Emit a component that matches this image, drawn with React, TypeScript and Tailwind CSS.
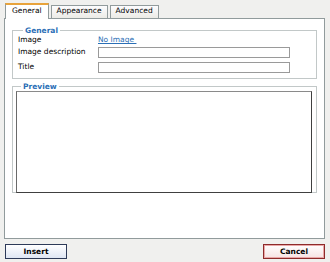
import React from "react";

const Tab = ({ label, active }: { label: string; active?: boolean }) => {
  if (active) {
    return (
      <div className="relative z-10 h-[16px] -mb-px bg-white border border-[#919b9c] border-b-0 border-t-[#e8a33b] border-t-2 px-[6px] pt-[2px] text-[#000]">
        {label}
      </div>
    );
  }
  return (
    <div className="h-[13px] bg-gradient-to-b from-[#fcfcfe] to-[#ecebe6] border border-[#919b9c] border-b-0 px-[5px] pt-[1px] text-[#000]">
      {label}
    </div>
  );
};

export default function App() {
  return (
    <div
      className="w-[330px] h-[262px] bg-[#f0f0ee] text-[7.5px] leading-none text-black overflow-hidden"
      style={{ fontFamily: '"DejaVu Sans", Verdana, sans-serif' }}
    >
      <div className="flex items-end gap-[2px] pl-[5px] pt-[2px] h-[18px]">
        <Tab label="General" active />
        <Tab label="Appearance" />
        <Tab label="Advanced" />
      </div>

      <div className="ml-[4px] w-[321px] h-[221px] bg-white border border-[#919b9c] pl-[7px] pt-[8px]">
        <fieldset className="w-[305px] h-[52px] border border-[#c2c8c8] pl-[5px]">
          <legend className="ml-[5px] px-[2px] font-bold text-[#2b6fb6]">General</legend>
          <div className="flex flex-col">
            <div className="flex items-center h-[9px] mt-[1px]">
              <span className="w-[80px]">Image</span>
              <span className="text-[#2b6fb6] underline">No Image&nbsp;</span>
            </div>
            <div className="flex items-center h-[11px] mt-[2px]">
              <span className="w-[80px]">Image description</span>
              <div className="w-[192px] h-[11px] border border-[#9a9a9a] bg-white" />
            </div>
            <div className="flex items-center h-[11px] mt-[4px]">
              <span className="w-[80px]">Title</span>
              <div className="w-[192px] h-[11px] border border-[#9a9a9a] bg-white" />
            </div>
          </div>
        </fieldset>

        <fieldset className="w-[305px] h-[110px] mt-[4px] border border-[#c2c8c8] pl-[3px]">
          <legend className="ml-[5px] px-[2px] font-bold text-[#2b6fb6]">Preview</legend>
          <div className="w-[296px] h-[102px] border border-[#404040] border-t-[#8a8a8a] border-l-[#6a6a6a] bg-white" />
        </fieldset>
      </div>

      <div className="flex justify-between px-[5px] mt-[5px]">
        <button className="w-[62px] h-[15px] border border-[#2d3a58] bg-gradient-to-b from-white to-[#dfe6f3] font-bold text-[7.5px] text-black">
          Insert
        </button>
        <button className="w-[62px] h-[15px] border border-[#8e2b2b] bg-gradient-to-b from-white to-[#f6e3e3] shadow-[inset_0_0_0_1px_#e9a8a8] font-bold text-[7.5px] text-black">
          Cancel
        </button>
      </div>
    </div>
  );
}
